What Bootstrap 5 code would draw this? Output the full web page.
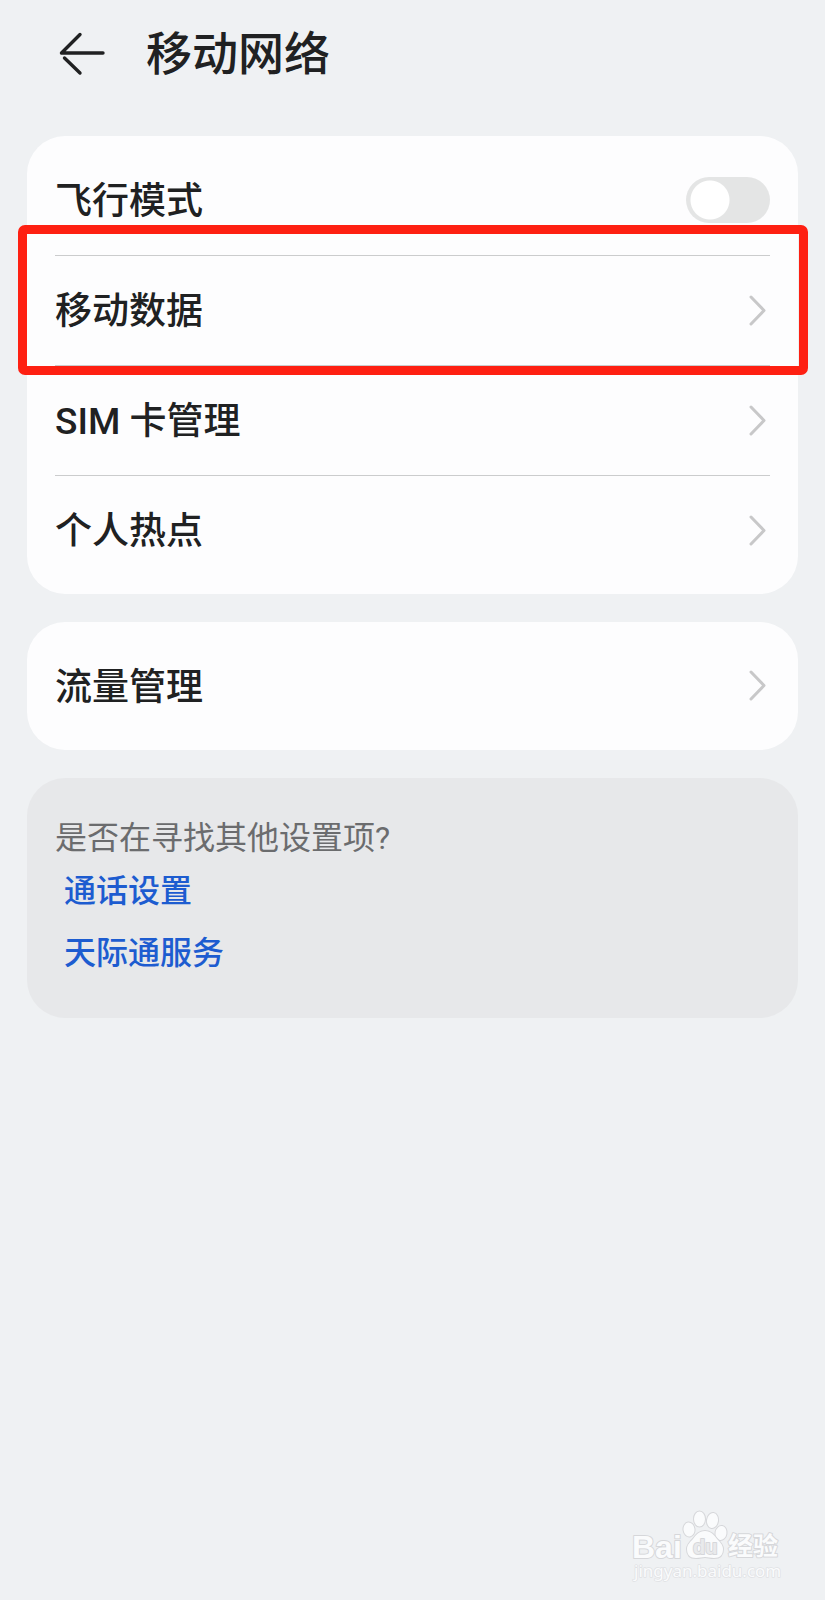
<!DOCTYPE html>
<html lang="zh-CN">
<head>
<meta charset="utf-8">
<meta name="viewport" content="width=device-width, initial-scale=1">
<title>移动网络</title>
<link href="https://cdn.jsdelivr.net/npm/bootstrap@5.3.0/dist/css/bootstrap.min.css" rel="stylesheet">
<style>
  body { background: #eff1f3; color: #202122; font-family: Roboto, "Noto Sans CJK SC", sans-serif; }
  .page-header { padding: 21px 56px 49px; gap: 38px; }
  .page-title { font-size: 46px; line-height: 66px; font-weight: 500; }
  .back-btn { width: 52px; height: 66px; }
  .sections { padding: 0 27px; gap: 28px; }
  .panel { border-radius: 38px; background: #fdfdfe; padding: 9px 28px; }
  .setting { height: 110px; font-size: 37px; font-weight: 500; color: inherit; }
  .setting > :first-child { padding-top: 3px; }
  .setting + .setting { border-top: 1px solid #cbcccd; }
  .marked::after { content: ""; position: absolute; inset: -31px -38px -10px -37px; border: 9px solid #fe2012; border-radius: 7px; pointer-events: none; z-index: 1; }
  .toggle.form-check-input[type=checkbox] { width: 84px; height: 46px; border: 0; border-radius: 23px; background: radial-gradient(circle at 24px 50%, #fff 19px, #e4e5e5 20px) no-repeat; }
  .toggle.form-check-input[type=checkbox]:checked { background: radial-gradient(circle at 60px 50%, #fff 19px, #1f5fd0 20px) no-repeat; }
  .help { background: #e7e8ea; padding: 33px 28px 29px; font-size: 32px; }
  .help-title { color: #6b6c6e; line-height: 54px; }
  .help-link { color: #1d5cd0; font-weight: 500; padding: 0 9px; line-height: 52px; margin-bottom: 10px; }
  .watermark { padding: 0 43px 16px; }
</style>
</head>
<body>
<div class="d-flex flex-column min-vh-100">
  <header class="page-header d-flex align-items-center">
    <button type="button" class="back-btn btn p-0 border-0 d-flex align-items-center" aria-label="返回">
      <svg width="52" height="44" viewBox="0 0 52 44" fill="none" stroke="#202122" stroke-width="3.4" stroke-linecap="round" stroke-linejoin="round"><path d="M24 2.500 5.500 21H47M8.500 26 24 41"/></svg>
    </button>
    <h1 class="page-title m-0">移动网络</h1>
  </header>

  <main class="sections d-flex flex-column">
    <section class="panel">
      <div class="setting d-flex align-items-center justify-content-between">
        <label for="airplane">飞行模式</label>
        <input class="toggle form-check-input m-0" type="checkbox" role="switch" id="airplane">
      </div>
      <a href="#" class="setting marked position-relative d-flex align-items-center justify-content-between text-decoration-none">
        <span>移动数据</span>
        <svg width="22" height="32" viewBox="0 0 22 32" fill="none" stroke="#c8c8c9" stroke-width="3" stroke-linecap="round" stroke-linejoin="round"><path d="M3 2 16 15.500 3 29"/></svg>
      </a>
      <a href="#" class="setting d-flex align-items-center justify-content-between text-decoration-none">
        <span>SIM 卡管理</span>
        <svg width="22" height="32" viewBox="0 0 22 32" fill="none" stroke="#c8c8c9" stroke-width="3" stroke-linecap="round" stroke-linejoin="round"><path d="M3 2 16 15.500 3 29"/></svg>
      </a>
      <a href="#" class="setting d-flex align-items-center justify-content-between text-decoration-none">
        <span>个人热点</span>
        <svg width="22" height="32" viewBox="0 0 22 32" fill="none" stroke="#c8c8c9" stroke-width="3" stroke-linecap="round" stroke-linejoin="round"><path d="M3 2 16 15.500 3 29"/></svg>
      </a>
    </section>

    <section class="panel">
      <a href="#" class="setting d-flex align-items-center justify-content-between text-decoration-none">
        <span>流量管理</span>
        <svg width="22" height="32" viewBox="0 0 22 32" fill="none" stroke="#c8c8c9" stroke-width="3" stroke-linecap="round" stroke-linejoin="round"><path d="M3 2 16 15.500 3 29"/></svg>
      </a>
    </section>

    <section class="panel help d-flex flex-column align-items-start">
      <p class="help-title m-0">是否在寻找其他设置项?</p>
      <a href="#" class="help-link text-decoration-none">通话设置</a>
      <a href="#" class="help-link text-decoration-none">天际通服务</a>
    </section>
  </main>

  <footer class="watermark d-flex justify-content-end mt-auto">
    <svg width="152" height="76" viewBox="0 0 152 76" fill="#fafbfc" stroke="#d6d7da" stroke-width="2" paint-order="stroke" stroke-linejoin="round">
      <text x="2" y="50" font-family="Liberation Sans, sans-serif" font-weight="700" font-size="32">Bai</text>
      <ellipse cx="59" cy="21.500" rx="5.500" ry="7" transform="rotate(-8 59 21.500)"/>
      <ellipse cx="69.500" cy="11" rx="5.500" ry="7.500"/>
      <ellipse cx="82.500" cy="12.500" rx="5.500" ry="7.500" transform="rotate(8 82.500 12.500)"/>
      <ellipse cx="91" cy="25" rx="5.500" ry="7" transform="rotate(10 91 25)"/>
      <path d="M75 23C81 23 84 27 87 31C90 34 93 37 93 41C93 47 90 50 84 50C80 50 78 49 75 49C72 49 70 50 66 50C60 50 57 47 57 41C57 37 60 34 63 31C66 27 69 23 75 23Z"/>
      <text x="63" y="46" font-family="Liberation Sans, sans-serif" font-weight="700" font-size="20" fill="#e9eaec">du</text>
      <text x="98" y="47" font-family="Noto Sans CJK SC, sans-serif" font-weight="700" font-size="25">经验</text>
      <text x="4" y="69" font-family="Noto Sans, sans-serif" font-size="17" stroke="#e0e1e4" stroke-width="1.500">jingyan.baidu.com</text>
    </svg>
  </footer>
</div>
<script src="https://cdn.jsdelivr.net/npm/bootstrap@5.3.0/dist/js/bootstrap.bundle.min.js"></script>
</body>
</html>
